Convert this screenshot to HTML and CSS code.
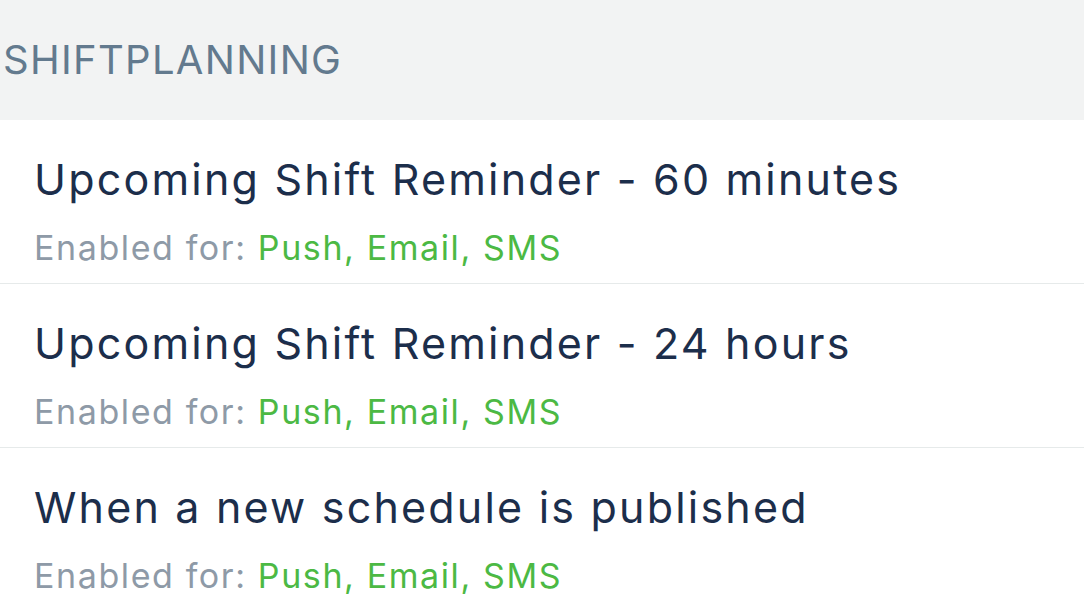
FILE: index.html
```html
<!DOCTYPE html>
<html>
<head>
<meta charset="utf-8">
<link rel="stylesheet" href="styles.css">
</head>
<body>
<div class="header">SHIFTPLANNING</div>
<ul class="list">
  <li class="row">
    <div class="title">Upcoming Shift Reminder - 60 minutes</div>
    <div class="sub">Enabled for: <span class="on">Push, Email, SMS</span></div>
  </li>
  <li class="row">
    <div class="title">Upcoming Shift Reminder - 24 hours</div>
    <div class="sub">Enabled for: <span class="on">Push, Email, SMS</span></div>
  </li>
  <li class="row">
    <div class="title">When a new schedule is published</div>
    <div class="sub">Enabled for: <span class="on">Push, Email, SMS</span></div>
  </li>
</ul>
</body>
</html>
```
FILE: styles.css
```css
html, body {
  margin: 0;
  padding: 0;
  background: #ffffff;
  font-family: Inter, "Noto Sans", sans-serif;
  overflow: hidden;
}
.header {
  height: 120px;
  background: #f2f3f3;
  color: #637a8e;
  font-size: 40px;
  letter-spacing: 1.3px;
  line-height: 120px;
  padding-left: 3px;
  box-sizing: border-box;
}
.list {
  list-style: none;
  margin: 0;
  padding: 0;
}
.row {
  height: 164px;
  box-sizing: border-box;
  border-bottom: 1px solid #e6eaea;
  padding: 33px 0 0 34px;
}
.title {
  color: #1c2e4b;
  font-size: 43px;
  letter-spacing: 2.2px;
  line-height: 52px;
}
.sub {
  color: #8e9aa7;
  font-size: 34px;
  letter-spacing: 1.6px;
  line-height: 44px;
  margin-top: 21px;
}
.on {
  color: #4cb944;
}
```
